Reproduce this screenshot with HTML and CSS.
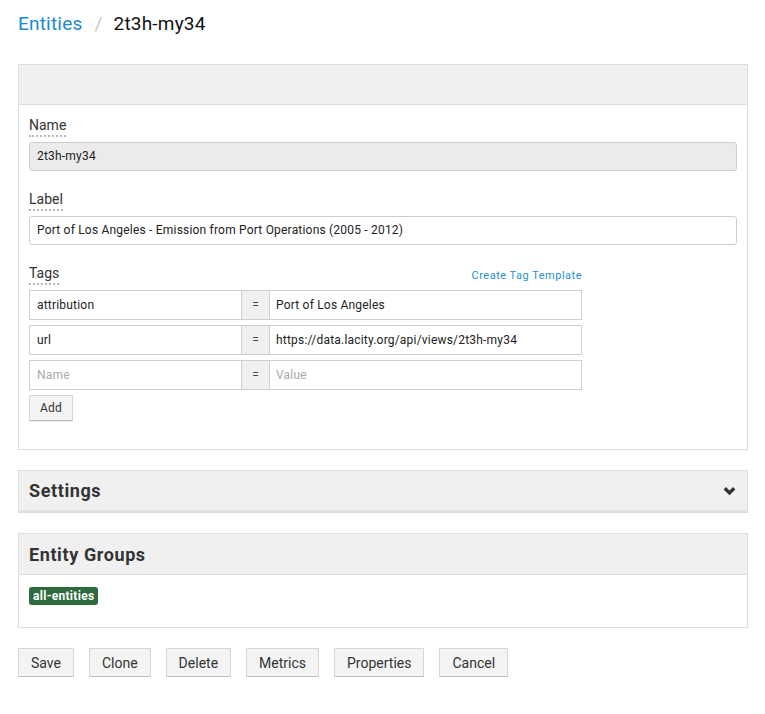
FILE: index.html
```html
<!DOCTYPE html>
<html>
<head>
<meta charset="utf-8">
<link rel="stylesheet" href="styles.css">
</head>
<body>
<div class="page">
  <div class="breadcrumb">
    <a class="crumb-link">Entities</a>
    <span class="crumb-sep">/</span>
    <span class="crumb-current">2t3h-my34</span>
  </div>

  <div class="panels">
    <div class="panel">
      <div class="panel-head panel-head-empty"></div>
      <div class="panel-body form-body">
        <div class="form-group">
          <label class="field-label">Name</label>
          <div class="input input-readonly">2t3h-my34</div>
        </div>
        <div class="form-group">
          <label class="field-label">Label</label>
          <div class="input">Port of Los Angeles - Emission from Port Operations (2005 - 2012)</div>
        </div>
        <div class="form-group tags-group">
          <div class="tags-head">
            <label class="field-label">Tags</label>
            <a class="small-link">Create Tag Template</a>
          </div>
          <div class="tag-row">
            <div class="tag-input tag-name">attribution</div>
            <div class="tag-eq">=</div>
            <div class="tag-input tag-value">Port of Los Angeles</div>
          </div>
          <div class="tag-row">
            <div class="tag-input tag-name">url</div>
            <div class="tag-eq">=</div>
            <div class="tag-input tag-value">https://data.lacity.org/api/views/2t3h-my34</div>
          </div>
          <div class="tag-row">
            <div class="tag-input tag-name placeholder">Name</div>
            <div class="tag-eq">=</div>
            <div class="tag-input tag-value placeholder">Value</div>
          </div>
          <div class="add-row">
            <button class="btn btn-small">Add</button>
          </div>
        </div>
      </div>
    </div>

    <div class="panel">
      <div class="panel-head panel-head-title panel-head-collapsed">
        <span class="panel-title">Settings</span>
        <svg class="chevron" width="13" height="10" viewBox="0 0 13 10"><polyline points="1.8,2.2 6.5,6.9 11.2,2.2" fill="none" stroke="#333" stroke-width="3.4"/></svg>
      </div>
    </div>

    <div class="panel">
      <div class="panel-head panel-head-title">
        <span class="panel-title">Entity Groups</span>
      </div>
      <div class="panel-body groups-body">
        <span class="badge">all-entities</span>
      </div>
    </div>
  </div>

  <div class="actions">
    <button class="btn">Save</button>
    <button class="btn">Clone</button>
    <button class="btn">Delete</button>
    <button class="btn">Metrics</button>
    <button class="btn">Properties</button>
    <button class="btn">Cancel</button>
  </div>
</div>
</body>
</html>
```

FILE: styles.css
```css
* { box-sizing: border-box; }
html, body { margin: 0; padding: 0; background: #fff; }
body {
  font-family: Roboto, "Liberation Sans", sans-serif;
  color: #222;
}
.page {
  padding: 10px 17px 0 18px;
}
.breadcrumb {
  display: flex;
  align-items: baseline;
  font-size: 19px;
  line-height: 28px;
  height: 28px;
  margin-bottom: 26px;
  letter-spacing: 0.2px;
}
.crumb-link { color: #1a8bcf; }
.crumb-sep { color: #c8c8c8; padding: 0 11px 0 12px; }
.crumb-current { color: #111; }

.panels {
  display: flex;
  flex-direction: column;
  gap: 20px;
}
.panel {
  border: 1px solid #dedede;
  background: #fff;
}
.panel-head {
  background: #f0f0f0;
  border-bottom: 1px solid #dedede;
}
.panel-head-empty { height: 40px; }
.panel-head-title {
  height: 41px;
  display: flex;
  align-items: center;
  justify-content: space-between;
  padding: 0 11px 0 10px;
}
.panel-head-collapsed {
  border-bottom: 2px solid #e0e0e0;
}
.panel-title {
  font-size: 18px;
  font-weight: 700;
  color: #333;
  letter-spacing: 0.6px;
}
.chevron { display: block; }

.form-body {
  padding: 10px 10px 10px 10px;
}
.form-group {
  display: flex;
  flex-direction: column;
  align-items: flex-start;
  margin-bottom: 18px;
}
.field-label {
  font-size: 14px;
  line-height: 20px;
  color: #333;
  border-bottom: 2px dotted #b8b8b8;
  margin-bottom: 5px;
}
.input {
  width: 100%;
  height: 29px;
  border: 1px solid #cfcfcf;
  border-radius: 3px;
  font-size: 12px;
  line-height: 27px;
  padding: 0 7px;
  color: #222;
  background: #fff;
  letter-spacing: 0.2px;
}
.input-readonly { background: #ebebeb; }

.tags-group { width: 553px; }
.tags-head {
  width: 100%;
  display: flex;
  justify-content: space-between;
  align-items: flex-start;
}
.tags-head .field-label { margin-bottom: 5px; }
.small-link {
  font-size: 11px;
  color: #2a8fd0;
  line-height: 20px;
  padding-top: 3px;
  letter-spacing: 0.5px;
}
.tag-row {
  display: flex;
  width: 100%;
  height: 30px;
  margin-bottom: 5px;
}
.tag-input {
  border: 1px solid #cfcfcf;
  font-size: 12px;
  line-height: 28px;
  padding: 0 7px;
  color: #222;
  letter-spacing: 0.2px;
}
.tag-name { width: 213px; }
.tag-value { flex: 1; padding-left: 6px; }
.placeholder { color: #aaa; }
.tag-eq {
  width: 27px;
  background: #efefef;
  border-top: 1px solid #cfcfcf;
  border-bottom: 1px solid #cfcfcf;
  font-size: 12px;
  line-height: 28px;
  text-align: center;
  color: #444;
}
.add-row { display: flex; }

.btn {
  font-family: inherit;
  font-size: 14px;
  color: #333;
  background: #f4f4f4;
  border: 1px solid #d6d6d6;
  border-bottom-color: #bdbdbd;
  box-shadow: 0 1px 0 rgba(0,0,0,0.08);
  border-radius: 1px;
  height: 29px;
  padding: 0 12px;
  margin: 0;
}
.btn-small {
  font-size: 12px;
  height: 26px;
  padding: 0 10px;
  letter-spacing: 0.2px;
}

.groups-body {
  padding: 10px 10px 22px 10px;
}
.badge {
  display: inline-block;
  background: #2d6a3e;
  color: #fff;
  font-size: 12px;
  font-weight: 700;
  line-height: 18px;
  padding: 0 4px;
  border-radius: 3px;
  letter-spacing: 0.3px;
}

.actions {
  display: flex;
  gap: 15px;
  margin-top: 20px;
}
```
